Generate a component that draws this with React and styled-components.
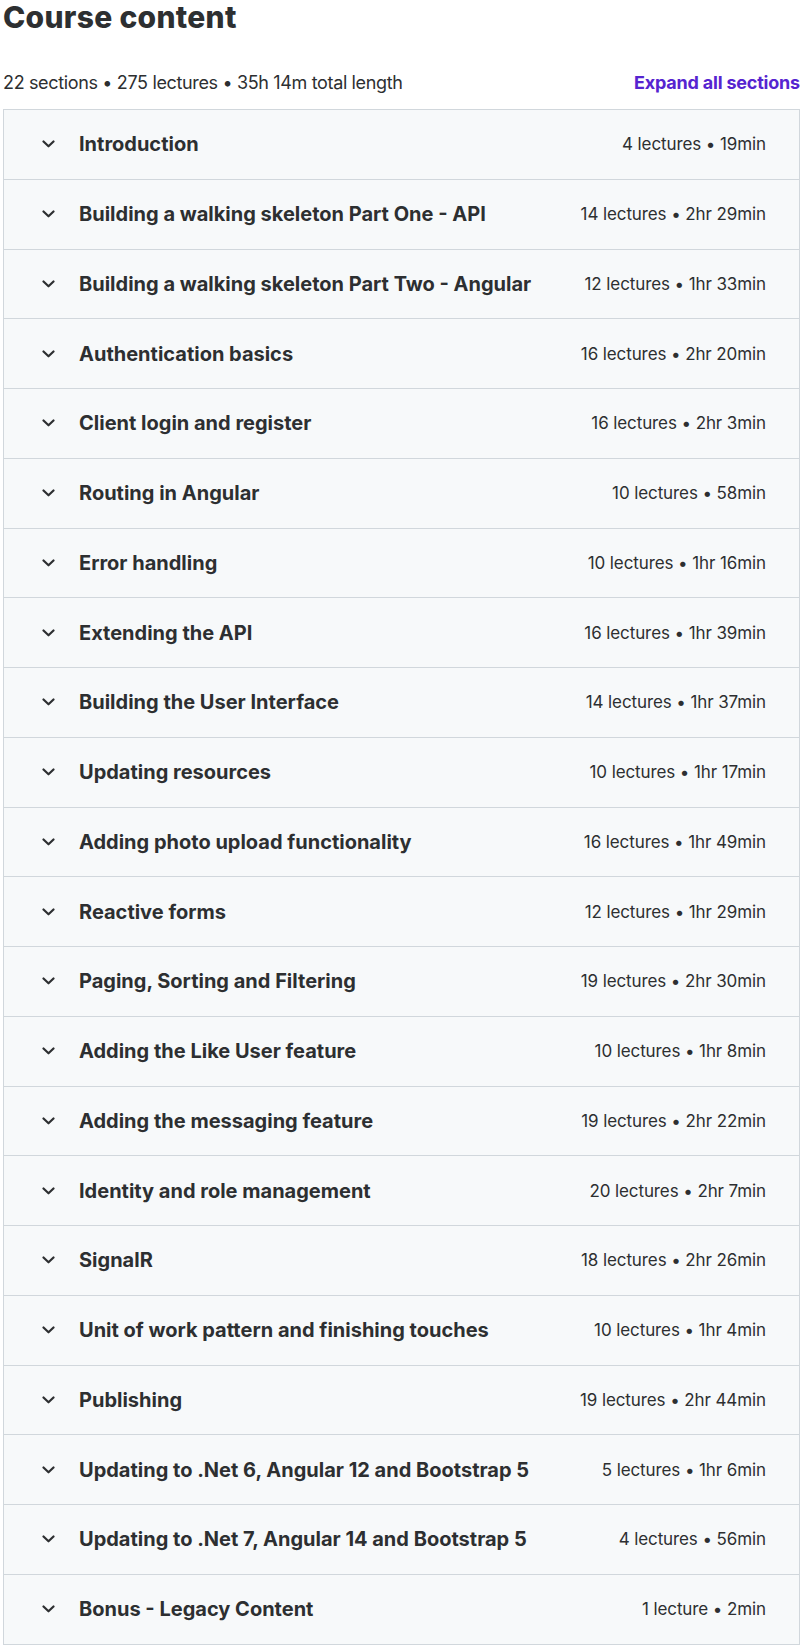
import React from "react";
import styled, { createGlobalStyle } from "styled-components";

const GlobalStyle = createGlobalStyle`
  html, body { margin: 0; padding: 0; background: #ffffff; }
  body { font-family: Inter, "Noto Sans", sans-serif; color: #2d2f31; }
`;

const sections = [
  ["Introduction", "4 lectures • 19min"],
  ["Building a walking skeleton Part One - API", "14 lectures • 2hr 29min"],
  ["Building a walking skeleton Part Two - Angular", "12 lectures • 1hr 33min"],
  ["Authentication basics", "16 lectures • 2hr 20min"],
  ["Client login and register", "16 lectures • 2hr 3min"],
  ["Routing in Angular", "10 lectures • 58min"],
  ["Error handling", "10 lectures • 1hr 16min"],
  ["Extending the API", "16 lectures • 1hr 39min"],
  ["Building the User Interface", "14 lectures • 1hr 37min"],
  ["Updating resources", "10 lectures • 1hr 17min"],
  ["Adding photo upload functionality", "16 lectures • 1hr 49min"],
  ["Reactive forms", "12 lectures • 1hr 29min"],
  ["Paging, Sorting and Filtering", "19 lectures • 2hr 30min"],
  ["Adding the Like User feature", "10 lectures • 1hr 8min"],
  ["Adding the messaging feature", "19 lectures • 2hr 22min"],
  ["Identity and role management", "20 lectures • 2hr 7min"],
  ["SignalR", "18 lectures • 2hr 26min"],
  ["Unit of work pattern and finishing touches", "10 lectures • 1hr 4min"],
  ["Publishing", "19 lectures • 2hr 44min"],
  ["Updating to .Net 6, Angular 12 and Bootstrap 5", "5 lectures • 1hr 6min"],
  ["Updating to .Net 7, Angular 14 and Bootstrap 5", "4 lectures • 56min"],
  ["Bonus - Legacy Content", "1 lecture • 2min"],
];

const Page = styled.div`
  padding-left: 3px;
  width: 797px;
`;

const Title = styled.h2`
  margin: 0;
  font-size: 30px;
  font-weight: 800;
  line-height: 34px;
  letter-spacing: 0.3px;
`;

const SummaryBar = styled.div`
  display: flex;
  justify-content: space-between;
  align-items: center;
  margin-top: 33px;
  height: 30px;
`;

const SummaryText = styled.span`
  font-size: 18px;
  letter-spacing: -0.35px;
`;

const ExpandButton = styled.button`
  border: none;
  background: none;
  padding: 0;
  font-family: inherit;
  font-size: 18px;
  font-weight: 700;
  color: #5624d0;
  letter-spacing: -0.2px;
  cursor: pointer;
`;

const Accordion = styled.div`
  margin-top: 12px;
  border: 1px solid #d1d7dc;
  border-bottom: none;
`;

const Row = styled.div`
  display: flex;
  align-items: center;
  box-sizing: border-box;
  height: 69.75px;
  padding: 0 33px 0 38px;
  background: #f7f9fa;
  border-bottom: 1px solid #d1d7dc;
`;

const Chevron = styled.svg`
  width: 13px;
  height: 8px;
  flex: none;
  margin-right: 24px;
`;

const SectionTitle = styled.span`
  flex: 1;
  font-size: 20px;
  font-weight: 700;
  letter-spacing: 0;
`;

const Meta = styled.span`
  font-size: 17px;
  letter-spacing: -0.1px;
`;

export default function App() {
  return (
    <>
      <GlobalStyle />
      <Page>
        <Title>Course content</Title>
        <SummaryBar>
          <SummaryText>22 sections • 275 lectures • 35h 14m total length</SummaryText>
          <ExpandButton>Expand all sections</ExpandButton>
        </SummaryBar>
        <Accordion>
          {sections.map(([name, meta]) => (
            <Row key={name}>
              <Chevron viewBox="0 0 13 8">
                <path d="M1.5 1.5 L6.5 6.3 L11.5 1.5" fill="none" stroke="#2d2f31" strokeWidth="2.2" strokeLinecap="round" strokeLinejoin="round" />
              </Chevron>
              <SectionTitle>{name}</SectionTitle>
              <Meta>{meta}</Meta>
            </Row>
          ))}
        </Accordion>
      </Page>
    </>
  );
}
